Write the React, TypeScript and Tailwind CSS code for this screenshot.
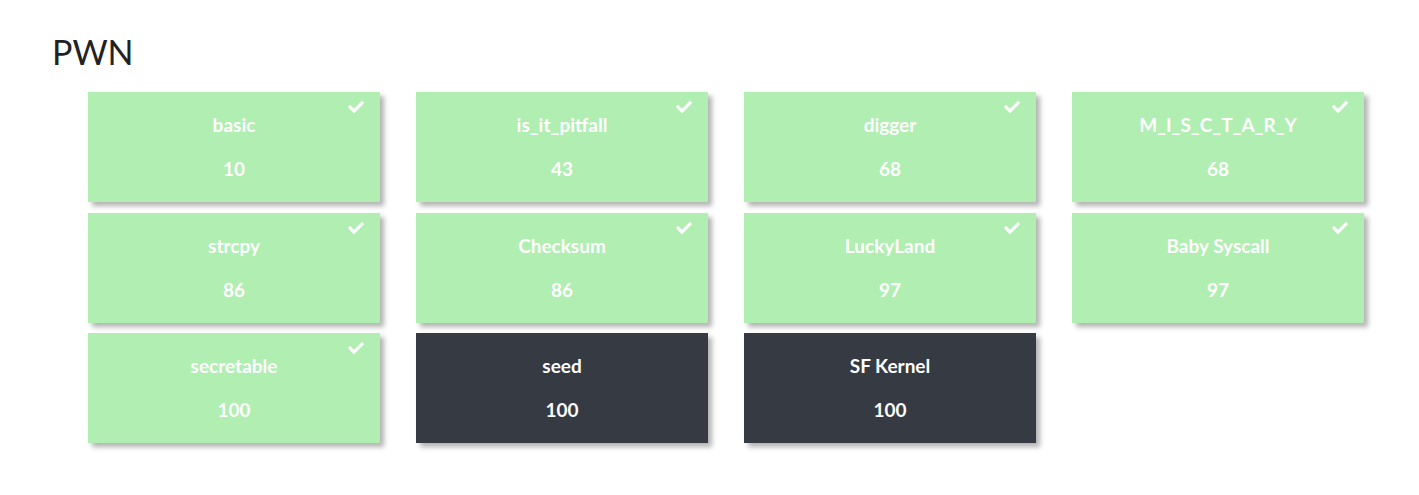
import { FaCheck } from "react-icons/fa";

const CHALLENGES = [
  { name: "basic", points: 10, solved: true },
  { name: "is_it_pitfall", points: 43, solved: true },
  { name: "digger", points: 68, solved: true },
  { name: "M_I_S_C_T_A_R_Y", points: 68, solved: true },
  { name: "strcpy", points: 86, solved: true },
  { name: "Checksum", points: 86, solved: true },
  { name: "LuckyLand", points: 97, solved: true },
  { name: "Baby Syscall", points: 97, solved: true },
  { name: "secretable", points: 100, solved: true },
  { name: "seed", points: 100, solved: false },
  { name: "SF Kernel", points: 100, solved: false },
];

function ChallengeCard({ name, points, solved }: { name: string; points: number; solved: boolean }) {
  return (
    <button
      type="button"
      className={`relative flex h-[110px] w-[292px] flex-col items-center text-white shadow-[4px_4px_5px_rgba(0,0,0,0.3)] ${
        solved ? "bg-[#b0eeb2]" : "bg-[#363a42]"
      }`}
    >
      {solved && <FaCheck className="absolute right-[15px] top-[7px] h-[16px] w-[18px]" />}
      <span className="mt-[21px] text-[19px] font-bold leading-[24px]">{name}</span>
      <span className="mt-[20px] text-[19px] font-bold leading-[24px]">{points}</span>
    </button>
  );
}

export default function App() {
  return (
    <div className="min-h-screen bg-white pl-[52px] pt-[30px] font-['Lato',sans-serif]">
      <h2 className="text-[34px] leading-[44px] text-[#222]">PWN</h2>
      <div className="ml-[36px] mt-[18px] grid grid-cols-[repeat(4,292px)] gap-x-[36px] gap-y-[10.5px]">
        {CHALLENGES.map((c) => (
          <ChallengeCard key={c.name} {...c} />
        ))}
      </div>
    </div>
  );
}
